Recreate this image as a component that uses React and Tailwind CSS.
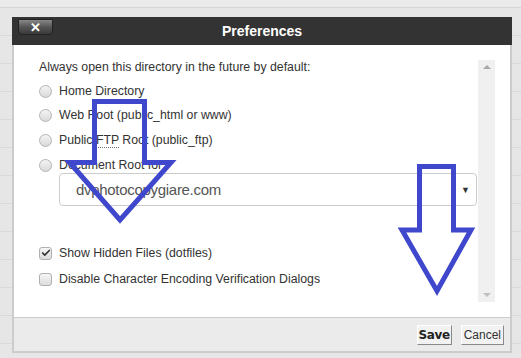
import { Check } from 'lucide-react'

const rows = Array.from({ length: 12 })

function Radio({ label }) {
  return (
    <div className="flex items-center h-4 gap-[7px]">
      <span className="w-[13px] h-[13px] rounded-full border border-[#b4b4b4] bg-gradient-to-b from-[#f4f4f4] to-[#d9d9d9]" />
      <span>{label}</span>
    </div>
  )
}

function Box({ checked, label }) {
  return (
    <div className="flex items-center h-4 gap-[7px]">
      <span className="w-[13px] h-[13px] rounded-[3px] border border-[#b0b0b0] bg-gradient-to-b from-[#f6f6f6] to-[#dcdcdc] flex items-center justify-center">
        {checked && <Check size={10} strokeWidth={4} className="text-[#333]" />}
      </span>
      <span>{label}</span>
    </div>
  )
}

export default function App() {
  return (
    <div className="relative w-[521px] h-[358px] overflow-hidden bg-[#e6e6e6] font-['Liberation_Sans',Arial,sans-serif]">
      {/* page behind the dialog */}
      <div className="h-[8px] bg-[#ebebeb] border-b border-[#d6d6d6]" />
      {rows.map((_, i) => (
        <div key={i} className="h-[28px] border-b border-[#d9d9d9]" />
      ))}

      {/* dialog */}
      <div className="absolute left-[12px] top-[17px] w-[500px] h-[336px] flex flex-col">
        <div className="relative h-[28px] bg-[#333] flex items-center justify-center">
          <button className="absolute left-[6px] top-[2px] w-[35px] h-[16px] rounded-b-[4px] border border-[#222] bg-gradient-to-b from-[#888] via-[#555] to-[#3a3a3a] flex items-center justify-center text-white font-bold text-[13px] leading-none">
            ✕
          </button>
          <span className="text-white font-bold text-[14px] mt-[1px]">Preferences</span>
        </div>

        <div className="flex-1 flex flex-col border-x-2 border-b-2 border-[#cccccc]">
          <div className="flex-1 bg-white p-[15px] flex">
            <div className="flex-1 pl-[10px] pr-[1px] text-[12.3px] text-[#333] leading-[14px] flex flex-col">
              <p>Always open this directory in the future by default:</p>
              <div className="mt-[9px]"><Radio label="Home Directory" /></div>
              <div className="mt-[8px]"><Radio label="Web Root (public_html or www)" /></div>
              <div className="mt-[9px]">
                <div className="flex items-center h-4 gap-[7px]">
                  <span className="w-[13px] h-[13px] rounded-full border border-[#b4b4b4] bg-gradient-to-b from-[#f4f4f4] to-[#d9d9d9]" />
                  <span>
                    Public <span className="border-b border-dotted border-[#777]">FTP</span> Root (public_ftp)
                  </span>
                </div>
              </div>
              <div className="mt-[9px]"><Radio label="Document Root for:" /></div>
              <div className="ml-[20px] h-[33px] rounded-[4px] border border-[#cccccc] flex items-center justify-between pl-[16px] pr-[6px]">
                <span className="text-[15px] tracking-[-0.3px] text-[#555]">dvphotocopygiare.com</span>
                <span className="text-[9px] text-[#333]">▼</span>
              </div>
              <div className="mt-[39px]"><Box checked label="Show Hidden Files (dotfiles)" /></div>
              <div className="mt-[10px]"><Box label="Disable Character Encoding Verification Dialogs" /></div>
            </div>
            <div className="w-[17px] bg-[#f0f0f0] flex flex-col items-center justify-between py-[5px]">
              <span className="w-0 h-0 border-x-[4px] border-x-transparent border-b-[4px] border-b-[#a8a8a8]" />
              <span className="w-0 h-0 border-x-[4px] border-x-transparent border-t-[4px] border-t-[#c0c0c0]" />
            </div>
          </div>

          <div className="h-[34px] bg-[#ebebeb] border-t border-[#cccccc] flex items-center justify-end gap-[9px] pr-[6px] pt-[1px]">
            <button className="h-[20px] px-[1px] bg-[#f2f2f2] border border-t-[#fff] border-l-[#fff] border-r-[#888] border-b-[#888] text-[12px] font-bold text-[#222] font-['DejaVu_Sans',sans-serif] tracking-[-0.4px]">
              Save
            </button>
            <button className="h-[20px] px-[2px] bg-[#f2f2f2] border border-t-[#fff] border-l-[#fff] border-r-[#888] border-b-[#888] text-[12px] text-[#333]">
              Cancel
            </button>
          </div>
        </div>
      </div>

      {/* hand-drawn arrows */}
      <svg className="absolute inset-0 pointer-events-none" width="521" height="358" viewBox="0 0 521 358">
        <polygon
          points="94.5,101.5 144.5,101.5 144.5,162.5 171,162.5 120,220 69.5,162.5 94.5,162.5"
          fill="none"
          stroke="#3f47cc"
          strokeWidth="5"
        />
        <polygon
          points="419.5,166.5 453.5,166.5 453.5,230 471,230 437,291 402,230 419.5,230"
          fill="none"
          stroke="#3f47cc"
          strokeWidth="5"
        />
      </svg>
    </div>
  )
}
